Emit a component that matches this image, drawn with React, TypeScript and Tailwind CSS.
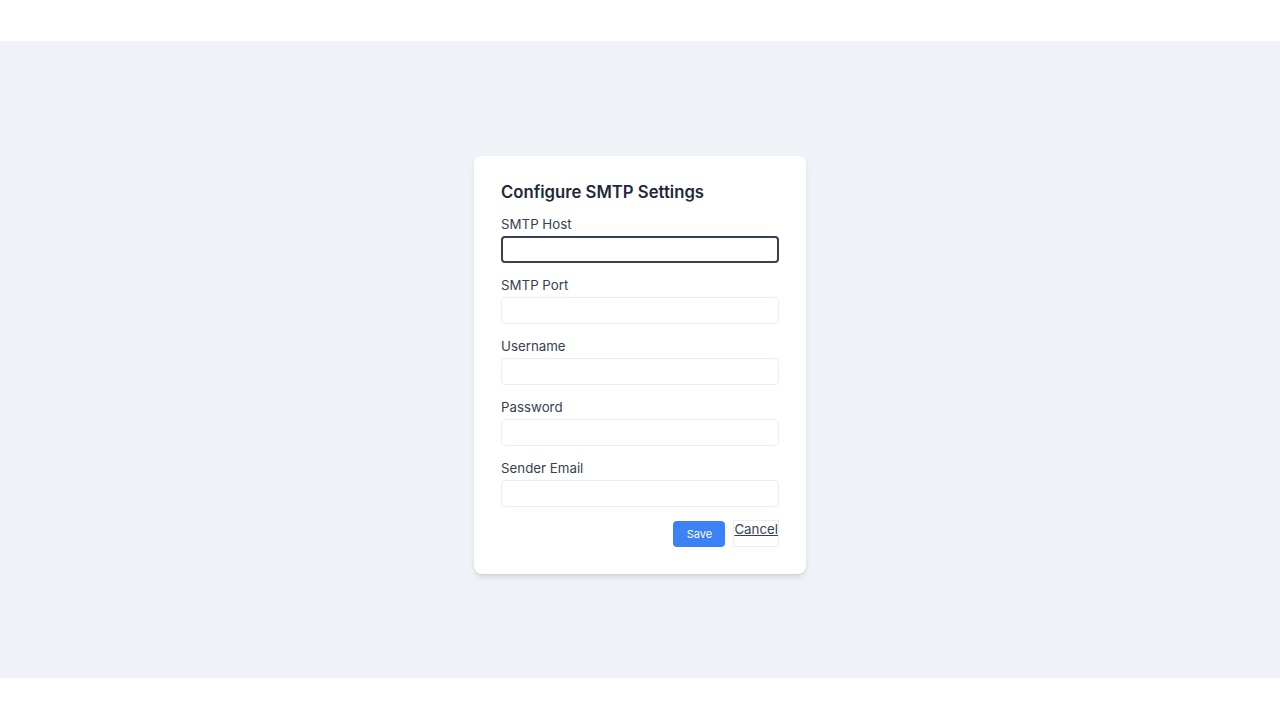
export default function App() {
  const fields = ["SMTP Host", "SMTP Port", "Username", "Password", "Sender Email"];
  return (
    <div className="bg-white pt-[41px] pb-[42px]" style={{ fontFamily: "Inter, 'Noto Sans', sans-serif" }}>
      <div className="h-[637px] bg-[#eff3f8] flex justify-center pt-[115px]">
        <div className="w-[332px] h-[418px] bg-white rounded-lg shadow-md px-[27px] pt-[22px]">
          <h2 className="text-[16.7px] leading-7 font-semibold text-[#1f2937] mb-2">Configure SMTP Settings</h2>
          {fields.map((f, i) => (
            <div key={f} className="mb-3">
              <label className="block text-[13.3px] leading-5 text-[#374151] mb-0.5">{f}</label>
              <div
                className={
                  i === 0
                    ? "h-[27px] rounded border-2 border-[#374151]"
                    : "h-[27px] rounded border border-[#eceef2]"
                }
              />
            </div>
          ))}
          <div className="flex justify-end gap-2 mt-[14px]">
            <button type="button" className="w-[52px] h-[26px] bg-[#3b82f6] text-white text-[11px] rounded">
              Save
            </button>
            <button type="button" className="border border-[#eceef2] text-[13.3px] leading-4 text-[#374151] underline self-stretch flex items-start -mt-px">
              Cancel
            </button>
          </div>
        </div>
      </div>
    </div>
  );
}
